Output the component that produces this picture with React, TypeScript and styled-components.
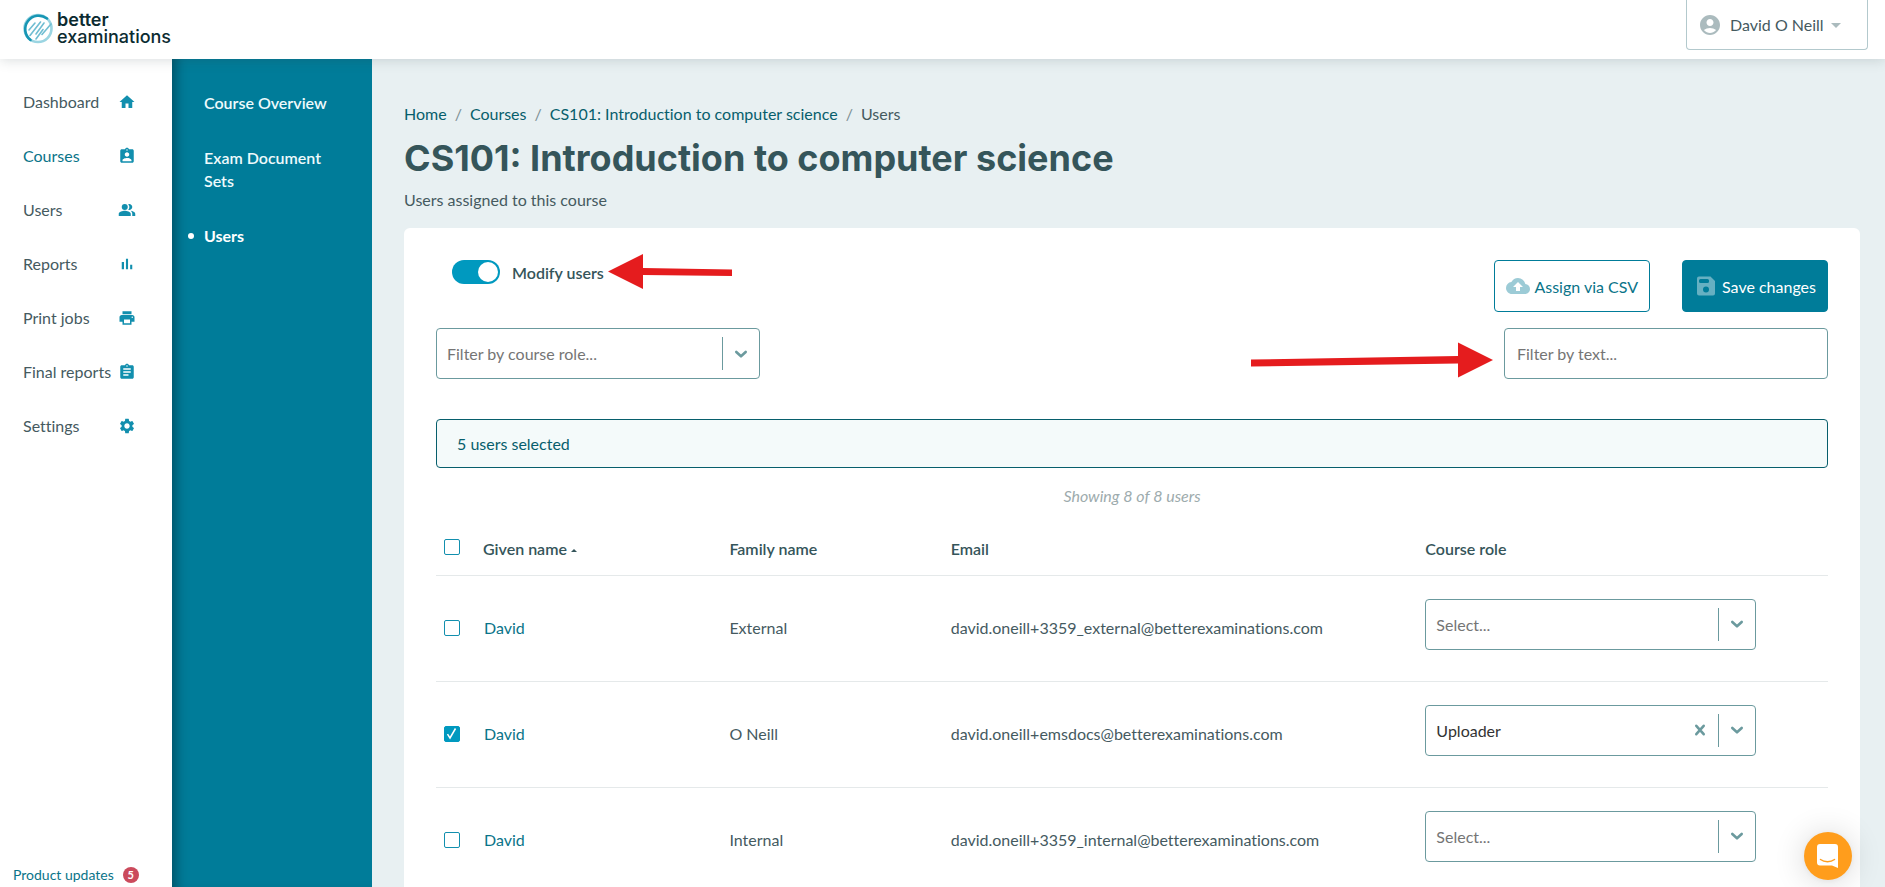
import React, { useState } from 'react';
import styled, { createGlobalStyle, css } from 'styled-components';
import {
  MdAccountCircle,
  MdArrowDropDown,
  MdAssignment,
  MdAssignmentInd,
  MdBackup,
  MdHome,
  MdPeopleAlt,
  MdPrint,
  MdSettings,
} from 'react-icons/md';

const color = {
  teal: '#007c99',
  bright: '#0099bf',
  link: '#0a7489',
  deep: '#075e6c',
  icon: '#128fae',
  ink: '#455a5f',
  heading: '#35555a',
  outline: '#6b9a9e',
  line: '#e5e9ea',
  page: '#e8f0f2',
  red: '#e51c1e',
};

const GlobalStyle = createGlobalStyle`
  *, *::before, *::after { box-sizing: border-box; }
  body {
    margin: 0;
    background: ${color.page};
    color: ${color.ink};
    font: 16px/23px Lato, sans-serif;
    font-variant-ligatures: none;
  }
  button, input, select { font: inherit; font-variant-ligatures: none; color: inherit; }
  a { color: ${color.link}; text-decoration: none; }
`;

const Shell = styled.div`
  display: flex;
  flex-direction: column;
  height: 100vh;
`;

const TopBar = styled.header`
  z-index: 2;
  flex: none;
  display: flex;
  justify-content: space-between;
  align-items: flex-start;
  height: 59px;
  padding: 0 17px 0 23px;
  background: #fff;
  box-shadow: 0 1px 12px rgba(60, 80, 85, 0.2);
`;

const Brand = styled.a`
  display: flex;
  align-items: center;
  gap: 3px;
  padding-top: 11px;
  color: #0b2b31;
  font: 500 18px/17px Inter, sans-serif;
`;

const BrandText = styled.span`
  display: flex;
  flex-direction: column;
`;

const BrandStrong = styled.span`
  font-weight: 600;
`;

const UserButton = styled.button`
  display: flex;
  align-items: center;
  width: 182px;
  height: 50px;
  padding: 0 0 0 11px;
  border: 1px solid #b3c9cd;
  border-top: 0;
  border-radius: 0 0 4px 4px;
  background: #fff;
  svg { color: #abbbbe; }
  span { margin-left: 8px; }
`;

const Body = styled.div`
  flex: 1;
  display: flex;
  min-height: 0;
`;

const Sidebar = styled.aside`
  flex: none;
  display: flex;
  flex-direction: column;
  justify-content: space-between;
  width: 172px;
  padding: 31px 0 1px;
  background: #fff;
`;

const MainNav = styled.nav`
  display: flex;
  flex-direction: column;
  gap: 31px;
`;

const NavLink = styled.a<{ $active?: boolean }>`
  display: flex;
  justify-content: space-between;
  align-items: center;
  padding: 0 36px 0 23px;
  color: ${(p) => (p.$active ? color.link : color.ink)};
  white-space: nowrap;
  svg { color: ${color.icon}; }
`;

const Updates = styled.a`
  display: flex;
  align-items: center;
  gap: 9px;
  padding-left: 13px;
  font-size: 14px;
`;

const Count = styled.span`
  width: 16px;
  height: 16px;
  border-radius: 8px;
  background: #cb4a5c;
  color: #fff;
  font-size: 11px;
  font-weight: 700;
  line-height: 16px;
  text-align: center;
`;

const SubNav = styled.nav`
  flex: none;
  display: flex;
  flex-direction: column;
  gap: 32px;
  width: 200px;
  padding: 32px;
  background: ${color.teal};
  box-shadow: inset 12px 0 12px -8px rgba(0, 40, 50, 0.5);
`;

const SubLink = styled.a<{ $active?: boolean }>`
  position: relative;
  color: ${(p) => (p.$active ? '#fff' : '#eefafc')};
  font-weight: ${(p) => (p.$active ? 700 : 600)};
  ${(p) =>
    p.$active &&
    css`
      &::before {
        content: '';
        position: absolute;
        left: -16px;
        top: 9px;
        width: 6px;
        height: 6px;
        border-radius: 3px;
        background: #fff;
      }
    `}
`;

const Main = styled.main`
  flex: 1;
  min-width: 0;
  padding: 43px 25px 0 32px;
  overflow-y: auto;
  scrollbar-width: none;
`;

const Crumbs = styled.ol`
  display: flex;
  margin: 0;
  padding: 0;
  list-style: none;
  a { color: ${color.deep}; }
  li + li::before {
    content: '/';
    padding: 0 8px;
    color: #7c8f94;
  }
`;

const Title = styled.h1`
  margin: 9px 0 6px;
  color: ${color.heading};
  font: 700 36px/48px Inter, sans-serif;
`;

const Subtitle = styled.p`
  margin: 0 0 17px;
`;

const Card = styled.section`
  min-height: 100%;
  padding: 32px;
  border-radius: 6px 6px 0 0;
  background: #fff;
`;

const Row = styled.div`
  display: flex;
  justify-content: space-between;
  align-items: flex-start;
  margin-bottom: 16px;
`;

const ToggleLabel = styled.label`
  position: relative;
  display: flex;
  align-items: center;
  gap: 12px;
  margin-left: 16px;
  color: ${color.heading};
  font-weight: 600;
`;

const Toggle = styled.input`
  appearance: none;
  width: 48px;
  height: 24px;
  margin: 0;
  padding: 2px;
  border-radius: 12px;
  background: #b3c9cd;
  &::before {
    content: '';
    display: block;
    width: 20px;
    height: 20px;
    border-radius: 10px;
    background: #fff;
  }
  &:checked { background: ${color.bright}; }
  &:checked::before { margin-left: 24px; }
`;

const LeftArrow = styled.svg`
  position: absolute;
  left: 100%;
  top: -6px;
  margin-left: 4px;
`;

const RightArrow = styled.svg`
  position: absolute;
  right: 100%;
  top: 14px;
  margin-right: 11px;
`;

const Actions = styled.div`
  display: flex;
  gap: 32px;
`;

const ActionButton = styled.button<{ $primary?: boolean }>`
  display: flex;
  align-items: center;
  gap: 4px;
  height: 52px;
  padding: 0 11px;
  border: 1px solid ${color.teal};
  border-radius: 4px;
  background: ${(p) => (p.$primary ? color.teal : '#fff')};
  color: ${(p) => (p.$primary ? '#fff' : color.link)};
  svg { color: ${(p) => (p.$primary ? '#66b0c2' : '#9ccbd6')}; }
`;

const FieldBox = styled.div<{ $width?: string }>`
  position: relative;
  width: ${(p) => p.$width ?? '324px'};
`;

const TextInput = styled.input`
  display: block;
  width: 100%;
  height: 51px;
  padding: 0 12px;
  border: 1px solid ${color.outline};
  border-radius: 4px;
  background: #fff;
  &::placeholder { color: #757575; opacity: 1; }
`;

const SelectInput = styled.select<{ $empty: boolean }>`
  appearance: none;
  display: block;
  width: 100%;
  height: 51px;
  padding: 0 80px 0 10px;
  border: 1px solid ${color.outline};
  border-radius: 4px;
  background: #fff;
  color: ${(p) => (p.$empty ? '#757575' : '#333')};
`;

const Indicators = styled.span`
  position: absolute;
  inset: 9px 9px 9px auto;
  display: flex;
  align-items: center;
  gap: 8px;
  color: ${color.outline};
  pointer-events: none;
`;

const Divider = styled.span`
  align-self: stretch;
  width: 1px;
  background: ${color.outline};
`;

const ClearButton = styled.button`
  display: flex;
  padding: 0;
  border: 0;
  background: none;
  color: ${color.outline};
  pointer-events: auto;
`;

const Notice = styled.div`
  height: 49px;
  margin-top: 40px;
  padding: 12px 20px;
  border: 1px solid ${color.deep};
  border-radius: 4px;
  background: #f4fafa;
  color: ${color.deep};
`;

const Showing = styled.p`
  margin: 16px 0;
  color: #9dabad;
  font-style: italic;
  text-align: center;
`;

const Table = styled.table`
  width: 100%;
  border-collapse: collapse;
  table-layout: fixed;
  th, td {
    padding: 0;
    border-bottom: 1px solid ${color.line};
    text-align: left;
  }
  th {
    height: 52px;
    color: ${color.heading};
    font-weight: 600;
  }
  td { height: 106px; padding-bottom: 2px; }
  th:first-child { padding-left: 8px; }
  td:first-child { padding: 0 0 0 8px; }
  td:nth-child(2) { padding-left: 1px; }
`;

const Column = styled.col<{ $width?: string }>`
  width: ${(p) => p.$width ?? 'auto'};
`;

const RoleCell = styled.td`
  && { padding: 0 72px 8px 0; }
`;

const Check = styled.input`
  appearance: none;
  display: block;
  width: 16px;
  height: 16px;
  margin: 0;
  border: 1px solid ${color.icon};
  border-radius: 2px;
  background: #fff;
  &:checked {
    border-color: ${color.bright};
    background: ${color.bright};
  }
`;

const CheckBox = styled.span<{ $raised?: boolean }>`
  position: relative;
  display: block;
  width: 16px;
  margin-bottom: ${(p) => (p.$raised ? '3px' : '0')};
  svg {
    position: absolute;
    inset: 0;
    pointer-events: none;
  }
`;

const SortArrow = styled.span`
  display: inline-block;
  margin: 0 0 3px 4px;
  border: 3px solid transparent;
  border-top: 0;
  border-bottom-color: ${color.heading};
`;

const ChatButton = styled.button`
  position: fixed;
  right: 33px;
  bottom: 7px;
  display: grid;
  place-items: center;
  width: 48px;
  height: 48px;
  padding: 0;
  border: 0;
  border-radius: 24px;
  background: #ff9d1c;
  box-shadow: 0 1px 6px rgba(0, 0, 0, 0.06), 0 2px 32px rgba(0, 0, 0, 0.16);
`;

const Logo = () => (
  <svg width="31" height="31" viewBox="0 0 31 31" fill="none" strokeLinecap="round" aria-hidden="true">
    <circle cx="15" cy="15.500" r="13.500" stroke="#9bd5e2" strokeWidth="2.600" />
    <path d="M7.500 27A13.500 13.500 0 0 1 24 5.500" stroke="#1796b4" strokeWidth="2.600" />
    <g stroke="#6fbdd2" strokeWidth="1.600">
      <path d="M6 17L12 10" />
      <path d="M7 22.500L17.500 9" />
      <path d="M13 21L21 10" />
      <path d="M13 26L20 16.500" />
      <path d="M19 21.500L28 11" />
    </g>
  </svg>
);

const BarsIcon = () => (
  <svg width="18" height="18" viewBox="0 0 24 24" fill="currentColor" aria-hidden="true">
    <path d="M5 9.200h3V19H5zM10.600 5h2.800v14h-2.800zm5.600 8H19v6h-2.800z" />
  </svg>
);

const SaveIcon = () => (
  <svg width="24" height="24" viewBox="0 0 24 24" fill="currentColor" fillRule="evenodd" aria-hidden="true">
    <path d="M5 2.500h11.500L21 7v12.500a2 2 0 0 1-2 2H5a2 2 0 0 1-2-2v-15a2 2 0 0 1 2-2zM6.500 5A1.500 1.500 0 0 0 5 6.500v1A1.500 1.500 0 0 0 6.500 9h7A1.500 1.500 0 0 0 15 7.500v-1A1.500 1.500 0 0 0 13.500 5zM12 12.500a3 3 0 1 0 0 6 3 3 0 0 0 0-6z" />
  </svg>
);

const Chevron = () => (
  <svg width="20" height="20" viewBox="0 0 20 20" fill="none" stroke="currentColor" strokeWidth="2.600" strokeLinecap="round" strokeLinejoin="round" aria-hidden="true">
    <path d="M5.300 8L10 12.300L14.700 8" />
  </svg>
);

const Cross = () => (
  <svg width="20" height="20" viewBox="0 0 20 20" fill="none" stroke="currentColor" strokeWidth="2.600" strokeLinecap="round" aria-hidden="true">
    <path d="M6.300 5.800L13.700 14.200M13.700 5.800L6.300 14.200" />
  </svg>
);

const ChatIcon = () => (
  <svg width="24" height="26" viewBox="0 0 24 26" fill="none" aria-hidden="true">
    <path d="M4 1h15a3 3 0 0 1 3 3v21l-6-2.500H4a3 3 0 0 1-3-3V4a3 3 0 0 1 3-3z" fill="#fff" />
    <path d="M4.500 16.500c4 3 10 3 14 0" stroke="#ff9d1c" strokeWidth="1.500" strokeLinecap="round" />
  </svg>
);

const nav = [
  { label: 'Dashboard', icon: <MdHome size={18} /> },
  { label: 'Courses', icon: <MdAssignmentInd size={18} />, active: true },
  { label: 'Users', icon: <MdPeopleAlt size={18} /> },
  { label: 'Reports', icon: <BarsIcon /> },
  { label: 'Print jobs', icon: <MdPrint size={18} /> },
  { label: 'Final reports', icon: <MdAssignment size={18} /> },
  { label: 'Settings', icon: <MdSettings size={18} /> },
];

const users = [
  { given: 'David', family: 'External', email: 'david.oneill+3359_external@betterexaminations.com', role: '', selected: false },
  { given: 'David', family: 'O Neill', email: 'david.oneill+emsdocs@betterexaminations.com', role: 'Uploader', selected: true },
  { given: 'David', family: 'Internal', email: 'david.oneill+3359_internal@betterexaminations.com', role: '', selected: false },
];

function RoleSelect(props: { label: string; placeholder: string; initial?: string; width?: string }) {
  const [value, setValue] = useState(props.initial ?? '');
  return (
    <FieldBox $width={props.width}>
      <SelectInput
        aria-label={props.label}
        $empty={!value}
        value={value}
        onChange={(e) => setValue(e.target.value)}
      >
        <option value="">{props.placeholder}</option>
        <option value="Uploader">Uploader</option>
      </SelectInput>
      <Indicators>
        {value && (
          <ClearButton type="button" aria-label="Clear role" onClick={() => setValue('')}>
            <Cross />
          </ClearButton>
        )}
        <Divider />
        <Chevron />
      </Indicators>
    </FieldBox>
  );
}

function Checkbox(props: { label: string; initial?: boolean; raised?: boolean }) {
  const [checked, setChecked] = useState(!!props.initial);
  return (
    <CheckBox $raised={props.raised}>
      <Check
        type="checkbox"
        aria-label={props.label}
        checked={checked}
        onChange={(e) => setChecked(e.target.checked)}
      />
      {checked && (
        <svg width="16" height="16" viewBox="0 0 16 16" fill="none" stroke="#fff" strokeWidth="1.500" aria-hidden="true">
          <path d="M3.500 8.200L6 12L11.500 2.500" />
        </svg>
      )}
    </CheckBox>
  );
}

export default function App() {
  const [modify, setModify] = useState(true);
  return (
    <Shell>
      <GlobalStyle />
      <TopBar>
        <Brand href="#">
          <Logo />
          <BrandText>
            <BrandStrong>better</BrandStrong>
            <span>examinations</span>
          </BrandText>
        </Brand>
        <UserButton type="button">
          <MdAccountCircle size={24} />
          <span>David O Neill</span>
          <MdArrowDropDown size={24} />
        </UserButton>
      </TopBar>
      <Body>
        <Sidebar>
          <MainNav aria-label="Main">
            {nav.map((item) => (
              <NavLink key={item.label} href="#" $active={item.active}>
                {item.label}
                {item.icon}
              </NavLink>
            ))}
          </MainNav>
          <Updates href="#">
            Product updates <Count>5</Count>
          </Updates>
        </Sidebar>
        <SubNav aria-label="Course">
          <SubLink href="#">Course Overview</SubLink>
          <SubLink href="#">Exam Document Sets</SubLink>
          <SubLink href="#" $active>
            Users
          </SubLink>
        </SubNav>
        <Main>
          <nav aria-label="Breadcrumb">
            <Crumbs>
              <li><a href="#">Home</a></li>
              <li><a href="#">Courses</a></li>
              <li><a href="#">CS101: Introduction to computer science</a></li>
              <li>Users</li>
            </Crumbs>
          </nav>
          <Title>CS101: Introduction to computer science</Title>
          <Subtitle>Users assigned to this course</Subtitle>
          <Card>
            <Row>
              <ToggleLabel>
                <Toggle type="checkbox" checked={modify} onChange={(e) => setModify(e.target.checked)} />
                Modify users
                <LeftArrow width="125" height="36" viewBox="0 0 125 36" fill={color.red} aria-hidden="true">
                  <path d="M0 17.500L35 0V14L124 15.500V22L35 21V35z" />
                </LeftArrow>
              </ToggleLabel>
              <Actions>
                <ActionButton type="button">
                  <MdBackup size={24} />
                  Assign via CSV
                </ActionButton>
                <ActionButton type="button" $primary>
                  <SaveIcon />
                  Save changes
                </ActionButton>
              </Actions>
            </Row>
            <Row>
              <RoleSelect label="Filter by course role" placeholder="Filter by course role..." />
              <FieldBox>
                <TextInput type="text" aria-label="Filter by text" placeholder="Filter by text..." />
                <RightArrow width="243" height="36" viewBox="0 0 243 36" fill={color.red} aria-hidden="true">
                  <path d="M243 18L208 0.500V14L1 17.500V24.500L208 21.500V35.500z" />
                </RightArrow>
              </FieldBox>
            </Row>
            <Notice role="status">5 users selected</Notice>
            <Showing>Showing 8 of 8 users</Showing>
            <Table>
              <colgroup>
                <Column $width="47px" />
                <Column $width="17.7%" />
                <Column $width="15.9%" />
                <Column $width="34.1%" />
                <Column />
              </colgroup>
              <thead>
                <tr>
                  <th><Checkbox label="Select all users" raised /></th>
                  <th>Given name<SortArrow /></th>
                  <th>Family name</th>
                  <th>Email</th>
                  <th>Course role</th>
                </tr>
              </thead>
              <tbody>
                {users.map((user) => (
                  <tr key={user.email}>
                    <td><Checkbox label={`Select ${user.given} ${user.family}`} initial={user.selected} /></td>
                    <td><a href="#">{user.given}</a></td>
                    <td>{user.family}</td>
                    <td>{user.email}</td>
                    <RoleCell>
                      <RoleSelect
                        label={`Course role of ${user.given} ${user.family}`}
                        placeholder="Select..."
                        initial={user.role}
                        width="100%"
                      />
                    </RoleCell>
                  </tr>
                ))}
              </tbody>
            </Table>
          </Card>
        </Main>
      </Body>
      <ChatButton type="button" aria-label="Open chat">
        <ChatIcon />
      </ChatButton>
    </Shell>
  );
}
